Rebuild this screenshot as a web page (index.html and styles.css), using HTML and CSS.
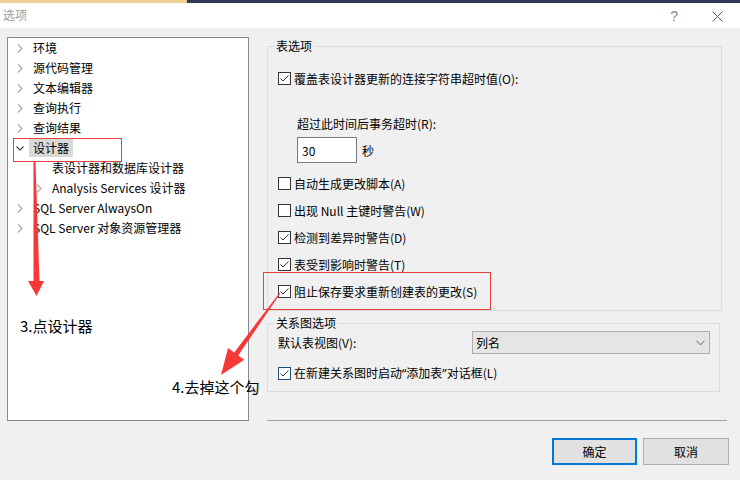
FILE: index.html
```html
<!DOCTYPE html>
<html lang="zh-CN">
<head>
<meta charset="utf-8">
<title>选项</title>
<link rel="stylesheet" href="styles.css">
</head>
<body>
<div class="topstrip"><div class="strip-accent"></div></div>
<div class="titlebar">
  <span class="title">选项</span>
  <span class="help">?</span>
  <svg class="close" width="11" height="11" viewBox="0 0 11 11"><path d="M0.5 0.5L10.5 10.5M10.5 0.5L0.5 10.5"/></svg>
</div>
<div class="main">
  <div class="tree">
    <div class="node"><svg class="chev" viewBox="0 0 8 9"><polyline points="2,0.5 6,4.5 2,8.5"/></svg><span class="label">环境</span></div>
    <div class="node"><svg class="chev" viewBox="0 0 8 9"><polyline points="2,0.5 6,4.5 2,8.5"/></svg><span class="label">源代码管理</span></div>
    <div class="node"><svg class="chev" viewBox="0 0 8 9"><polyline points="2,0.5 6,4.5 2,8.5"/></svg><span class="label">文本编辑器</span></div>
    <div class="node"><svg class="chev" viewBox="0 0 8 9"><polyline points="2,0.5 6,4.5 2,8.5"/></svg><span class="label">查询执行</span></div>
    <div class="node"><svg class="chev" viewBox="0 0 8 9"><polyline points="2,0.5 6,4.5 2,8.5"/></svg><span class="label">查询结果</span></div>
    <div class="node"><svg class="chev open" viewBox="0 0 8 9"><polyline points="0.5,2.5 4,6 7.5,2.5"/></svg><span class="label sel">设计器</span></div>
    <div class="node l1"><span class="chev"></span><span class="label">表设计器和数据库设计器</span></div>
    <div class="node l1"><svg class="chev" viewBox="0 0 8 9"><polyline points="2,0.5 6,4.5 2,8.5"/></svg><span class="label">Analysis Services 设计器</span></div>
    <div class="node"><svg class="chev" viewBox="0 0 8 9"><polyline points="2,0.5 6,4.5 2,8.5"/></svg><span class="label">SQL Server AlwaysOn</span></div>
    <div class="node"><svg class="chev" viewBox="0 0 8 9"><polyline points="2,0.5 6,4.5 2,8.5"/></svg><span class="label">SQL Server 对象资源管理器</span></div>
  </div>
  <div class="right">
    <fieldset class="group g1">
      <legend>表选项</legend>
      <div class="cb first"><svg class="box" viewBox="0 0 13 13"><rect x="0.5" y="0.5" width="12" height="12"/><polyline points="2.5,6.5 5,9 10.5,3.5"/></svg><span>覆盖表设计器更新的连接字符串超时值(O):</span></div>
      <div class="sublabel">超过此时间后事务超时(R):</div>
      <div class="timeout"><input class="num" type="text" value="30"><span class="unit">秒</span></div>
      <div class="cb gap10"><svg class="box" viewBox="0 0 13 13"><rect x="0.5" y="0.5" width="12" height="12"/></svg><span>自动生成更改脚本(A)</span></div>
      <div class="cb gap7"><svg class="box" viewBox="0 0 13 13"><rect x="0.5" y="0.5" width="12" height="12"/></svg><span>出现 Null 主键时警告(W)</span></div>
      <div class="cb gap7"><svg class="box" viewBox="0 0 13 13"><rect x="0.5" y="0.5" width="12" height="12"/><polyline points="2.5,6.5 5,9 10.5,3.5"/></svg><span>检测到差异时警告(D)</span></div>
      <div class="cb gap7"><svg class="box" viewBox="0 0 13 13"><rect x="0.5" y="0.5" width="12" height="12"/><polyline points="2.5,6.5 5,9 10.5,3.5"/></svg><span>表受到影响时警告(T)</span></div>
      <div class="cb gap7"><svg class="box" viewBox="0 0 13 13"><rect x="0.5" y="0.5" width="12" height="12"/><polyline points="2.5,6.5 5,9 10.5,3.5"/></svg><span>阻止保存要求重新创建表的更改(S)</span></div>
    </fieldset>
    <fieldset class="group g2">
      <legend>关系图选项</legend>
      <div class="viewrow">
        <span>默认表视图(V):</span>
        <div class="combo"><span>列名</span><svg class="combo-chev" viewBox="0 0 9 6"><polyline points="0.5,0.8 4.5,4.8 8.5,0.8"/></svg></div>
      </div>
      <div class="cb gap9"><svg class="box focus" viewBox="0 0 13 13"><rect x="0.5" y="0.5" width="12" height="12"/><polyline points="2.5,6.5 5,9 10.5,3.5"/></svg><span>在新建关系图时启动<span class="q">“</span>添加表<span class="q">”</span>对话框(L)</span></div>
    </fieldset>
    <div class="separator"></div>
    <div class="buttons">
      <button class="btn ok">确定</button>
      <button class="btn cancel">取消</button>
    </div>
  </div>
</div>

<svg class="annot" width="740" height="480" viewBox="0 0 740 480">
  <polygon points="33.5,162 35.5,162 39.5,281 44,281 36.5,296 28,281 33.5,281"/>
  <polygon points="280.4,293.3 238.2,355.4 244.3,359.7 221,375 228.1,348.1 234.2,352.4 279.6,292.7"/>
</svg>
<div class="redbox rb1"></div>
<div class="redbox rb2"></div>
<div class="note n3">3.点设计器</div>
<div class="note n4">4.去掉这个勾</div>
</body>
</html>
```

FILE: styles.css
```css
html, body {
  margin: 0;
  padding: 0;
}
body {
  width: 740px;
  height: 480px;
  background: #f0f0f0;
  font-family: "Noto Sans CJK SC", "Noto Sans", sans-serif;
  font-size: 12px;
  color: #000;
  overflow: hidden;
  position: relative;
}

.topstrip {
  height: 3px;
  background: #2c3b58;
  display: flex;
}
.strip-accent {
  width: 187px;
  background: #ecd193;
}

.titlebar {
  height: 25px;
  background: #fff;
  display: flex;
  align-items: center;
  padding-left: 3px;
}
.title {
  color: #9a9a9a;
  line-height: 16px;
  margin-top: -2px;
}
.help {
  margin-left: auto;
  color: #8a8a8a;
  font-family: "Liberation Sans", sans-serif;
  font-size: 14px;
  line-height: 16px;
}
.close {
  margin-left: 34px;
  margin-right: 17px;
  margin-top: 1px;
  fill: none;
  stroke: #5a5a5a;
  stroke-width: 1;
}

.main {
  display: flex;
  padding: 9px 0 0 7px;
}

.tree {
  width: 242px;
  height: 384px;
  box-sizing: border-box;
  border: 1px solid #828790;
  background: #fff;
  flex: none;
}
.node {
  display: flex;
  align-items: center;
  height: 20px;
  padding-left: 8px;
  white-space: nowrap;
}
.node.l1 {
  padding-left: 27px;
}
.chev {
  width: 8px;
  height: 9px;
  flex: none;
  margin-right: 5px;
  fill: none;
  stroke: #a6a6a6;
  stroke-width: 1.1;
}
.chev.open {
  stroke: #404040;
}
.label {
  padding: 0 4px;
  line-height: 18px;
}
.label.sel {
  background: #d9d9d9;
}

.right {
  margin-left: 18px;
  width: 462px;
  flex: none;
}

.group {
  margin: 0;
  border: 1px solid #dcdcdc;
  padding: 0 0 9px 10px;
  min-width: 0;
  box-sizing: border-box;
}
.group legend {
  padding: 0 2px;
  margin-left: -4px;
  line-height: 18px;
  font-size: 12px;
}
.g1 {
  width: 455px;
}
.g2 {
  width: 453px;
  margin-top: 3px;
  padding-bottom: 8px;
}

.cb {
  display: flex;
  align-items: center;
  height: 20px;
  white-space: nowrap;
}
.cb.first { margin-top: 13px; }
.cb.gap10 { margin-top: 10px; }
.cb.gap7 { margin-top: 7px; }
.cb.gap9 { margin-top: 9px; }

.q {
  font-family: "Noto Sans", sans-serif;
}

.box {
  width: 13px;
  height: 13px;
  flex: none;
  margin-right: 3px;
  fill: none;
  stroke: #333;
  stroke-width: 1;
}
.box rect {
  fill: #fff;
}
.box.focus rect {
  stroke: #1f4e79;
}

.sublabel {
  margin-top: 26px;
  padding-left: 19px;
  line-height: 20px;
}
.timeout {
  margin-top: 3px;
  padding-left: 19px;
  display: flex;
  align-items: center;
}
.num {
  width: 60px;
  height: 26px;
  box-sizing: border-box;
  border: 1px solid #7a7a7a;
  background: #fff;
  padding: 0 0 0 4px;
  margin: 0;
  font: inherit;
  font-size: 12px;
  color: #000;
  outline: none;
}
.unit {
  margin-left: 5px;
}

.viewrow {
  display: flex;
  align-items: center;
  margin-top: -1px;
  height: 23px;
}
.combo {
  width: 238px;
  height: 23px;
  box-sizing: border-box;
  border: 1px solid #adadad;
  background: #e5e5e5;
  display: flex;
  align-items: center;
  padding-left: 3px;
  margin-left: auto;
  margin-right: 9px;
}
.combo-chev {
  width: 9px;
  height: 6px;
  margin-left: auto;
  margin-right: 4px;
  fill: none;
  stroke: #606060;
  stroke-width: 1;
}

.separator {
  margin-top: 28px;
  width: 460px;
  height: 1px;
  background: #a0a0a0;
}
.buttons {
  margin-top: 17px;
  display: flex;
  justify-content: flex-end;
  gap: 6px;
}
.btn {
  height: 27px;
  box-sizing: border-box;
  background: #e1e1e1;
  border: 1px solid #adadad;
  font: inherit;
  font-size: 12px;
  color: #000;
  padding: 0;
  margin: 0;
  display: flex;
  align-items: center;
  justify-content: center;
}
.btn.ok {
  width: 85px;
  border: 2px solid #0078d7;
}
.btn.cancel {
  width: 86px;
}

.annot {
  position: absolute;
  left: 0;
  top: 0;
  fill: #f83838;
  pointer-events: none;
}
.redbox {
  position: absolute;
  box-sizing: border-box;
  border: 1px solid #e8403f;
}
.rb1 {
  left: 13px;
  top: 138px;
  width: 109px;
  height: 24px;
}
.rb2 {
  left: 263px;
  top: 272px;
  width: 228px;
  height: 38px;
}
.note {
  position: absolute;
  font-size: 15px;
  line-height: 20px;
  white-space: nowrap;
}
.n3 {
  left: 20px;
  top: 316px;
}
.n4 {
  left: 172px;
  top: 377px;
}
```
